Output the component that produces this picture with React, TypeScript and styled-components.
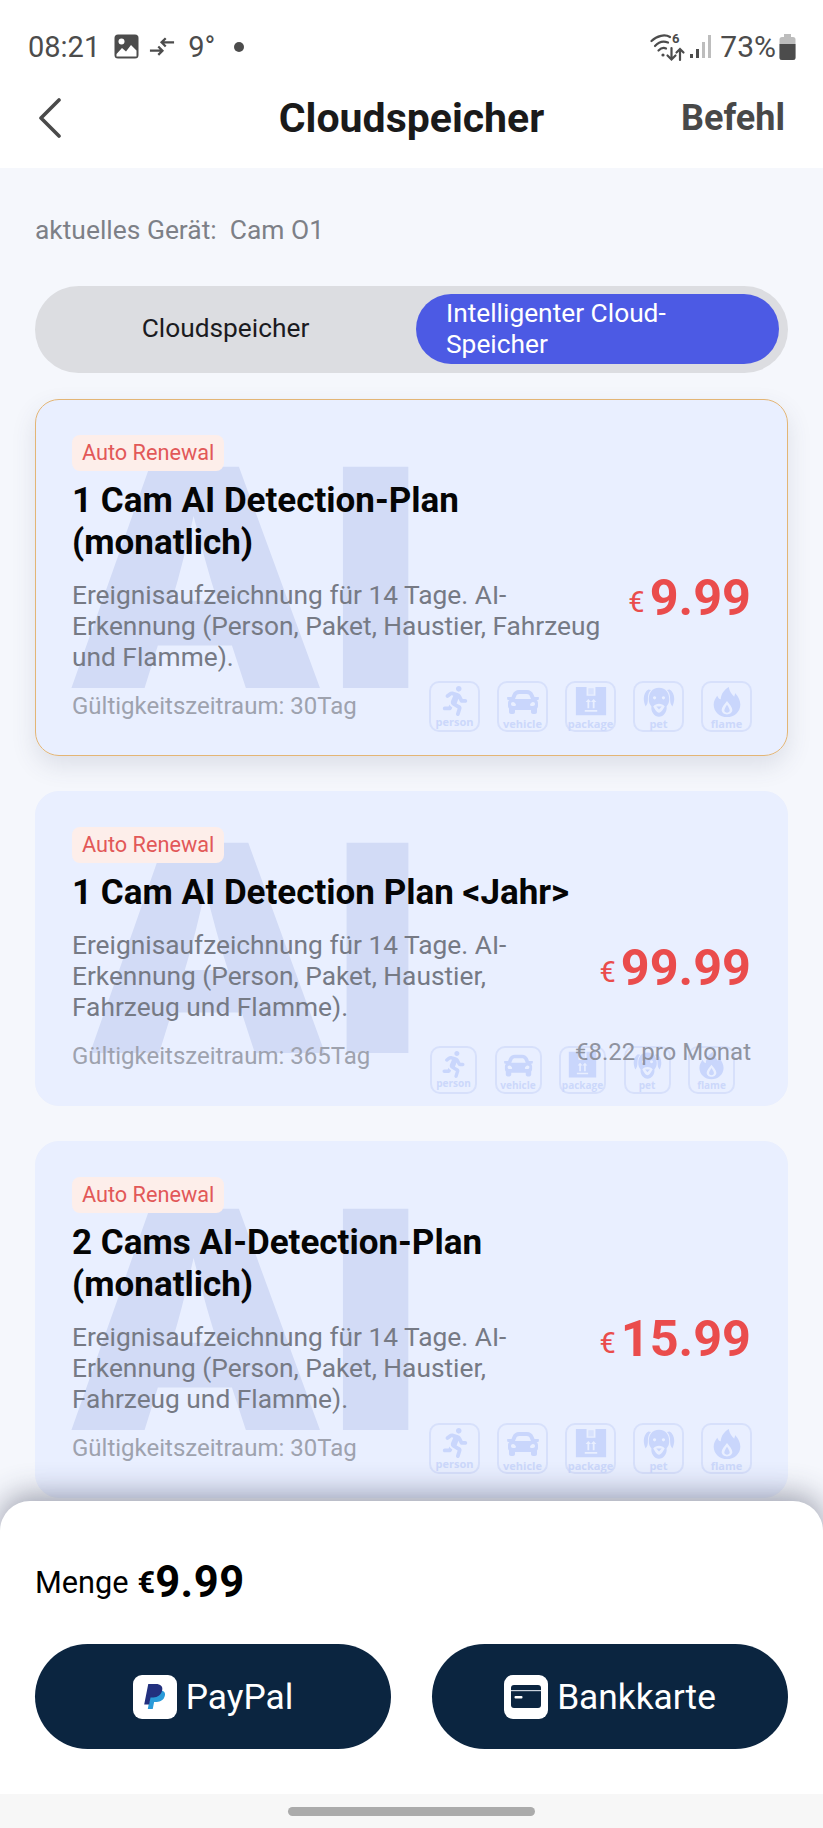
import React from 'react';
import styled, { createGlobalStyle } from 'styled-components';
import { FaRunning, FaCar } from 'react-icons/fa';

const GlobalStyle = createGlobalStyle`
  html, body {
    margin: 0;
    padding: 0;
    background: #f5f7fc;
    font-family: Roboto, "Liberation Sans", sans-serif;
  }
  * { box-sizing: border-box; }
`;

const Page = styled.div`
  width: 823px;
  height: 1828px;
  display: flex;
  flex-direction: column;
  overflow: hidden;
  background: #f5f7fc;
`;

const TopArea = styled.div`
  background: #fff;
  height: 168px;
  flex: none;
`;

const StatusBar = styled.div`
  height: 84px;
  padding: 9px 27px 0 28px;
  display: flex;
  align-items: center;
  justify-content: space-between;
  color: #4c4c4c;
  font-size: 29px;
`;

const StatusGroup = styled.div`
  display: flex;
  align-items: center;
`;

const NavBar = styled.div`
  height: 84px;
  padding: 0 38px 16px;
  display: grid;
  grid-template-columns: 1fr auto 1fr;
  align-items: center;
`;

const NavTitle = styled.div`
  font-size: 41px;
  font-weight: 700;
  color: #1a1a1a;
`;

const NavAction = styled.div`
  justify-self: end;
  font-size: 36px;
  font-weight: 700;
  color: #484848;
`;

const Content = styled.div`
  flex: 1;
  min-height: 0;
  padding: 0 35px;
`;

const DeviceLine = styled.div`
  margin-top: 47px;
  font-size: 26.4px;
  line-height: 30px;
  color: #7d8087;
  white-space: pre;
`;

const Segment = styled.div`
  margin-top: 41px;
  height: 87px;
  border-radius: 44px;
  background: #dcdde1;
  padding: 8px 9px 9px 9px;
  display: flex;
`;

const SegmentItem = styled.div<{ $active?: boolean }>`
  flex: ${(p) => (p.$active ? '0 0 363px' : '1')};
  min-width: 0;
  display: flex;
  align-items: center;
  justify-content: ${(p) => (p.$active ? 'flex-start' : 'center')};
  padding: ${(p) => (p.$active ? '0 30px 1px' : '0 9px 2px 0')};
  border-radius: 35px;
  font-size: 26.3px;
  line-height: 31px;
  color: ${(p) => (p.$active ? '#fff' : '#1b1b1f')};
  background: ${(p) => (p.$active ? '#4c5ae4' : 'transparent')};
`;

const CardList = styled.div`
  margin-top: 26px;
  display: flex;
  flex-direction: column;
`;

const Card = styled.div<{ $selected?: boolean; $gap: number }>`
  position: relative;
  flex: none;
  margin-bottom: ${(p) => p.$gap}px;
  padding: 35px 36px 23px 36px;
  border-radius: 24px;
  background: #e9efff;
  border: 1px solid ${(p) => (p.$selected ? '#e3b575' : '#e9efff')};
`;

const SelectedShadow = styled.div`
  border-radius: 24px;
  box-shadow: 0 10px 24px rgba(60, 70, 100, 0.13);
  margin-bottom: 35px;
`;

const Watermark = styled.div<{ $top: number; $narrow?: boolean }>`
  position: absolute;
  left: ${(p) => (p.$narrow ? 47 : 28)}px;
  top: ${(p) => p.$top}px;
  font-family: Inter, sans-serif;
  font-weight: 900;
  font-size: 304px;
  line-height: 221px;
  color: #d2dbf6;
  transform-origin: 0 0;
  transform: ${(p) => (p.$narrow ? 'scale(1.03, 0.95)' : 'scale(1.09, 1)')};
  white-space: nowrap;
  pointer-events: none;
`;

const CardInner = styled.div`
  position: relative;
`;

const Tag = styled.span`
  display: inline-block;
  height: 36px;
  padding: 0 10px;
  border-radius: 8px;
  background: #fdeeea;
  color: #e25858;
  font-size: 21.7px;
  line-height: 36px;
  vertical-align: top;
`;

const CardTitle = styled.div`
  margin-top: 9px;
  width: 540px;
  font-size: 35px;
  line-height: 42px;
  font-weight: 700;
  color: #050505;
`;

const CardBody = styled.div`
  margin-top: 16px;
  display: flex;
  align-items: flex-start;
  justify-content: space-between;
`;

const Description = styled.div`
  flex: 1;
  min-width: 0;
  margin-right: 20px;
  font-size: 26.3px;
  line-height: 31px;
  color: #767a85;
`;

const Price = styled.div<{ $offset: number }>`
  flex: none;
  display: flex;
  align-items: baseline;
  color: #ea4c4c;
  font-weight: 700;
  font-size: 50.4px;
  line-height: 60px;
  margin-top: ${(p) => p.$offset}px;
`;

const PriceSymbol = styled.span`
  font-size: 29px;
  font-weight: 400;
  margin-right: 5px;
  transform: translateY(-3px);
`;

const CardFooter = styled.div`
  margin-top: 7px;
  height: 52px;
  display: flex;
  align-items: center;
  justify-content: space-between;
`;

const Validity = styled.div`
  font-size: 24px;
  color: #9ea2ae;
`;

const MonthlyNote = styled.div`
  position: absolute;
  right: 0;
  bottom: 16px;
  font-size: 24px;
  color: #8f939f;
`;

const BadgeRow = styled.div<{ $compact?: boolean }>`
  display: flex;
  gap: ${(p) => (p.$compact ? 17.5 : 17)}px;
  align-self: ${(p) => (p.$compact ? 'flex-end' : 'center')};
  margin-bottom: ${(p) => (p.$compact ? -12 : 0)}px;
  margin-right: ${(p) => (p.$compact ? 16 : -1)}px;
`;

const Badge = styled.div<{ $compact?: boolean }>`
  width: ${(p) => (p.$compact ? 47 : 51)}px;
  height: ${(p) => (p.$compact ? 48 : 51)}px;
  border: 2px solid #d7e0fb;
  border-radius: 10px;
  display: flex;
  flex-direction: column;
  align-items: center;
  justify-content: flex-start;
  padding-top: 3px;
  color: #c9d6fc;
  svg { flex: none; }
`;

const BadgeLabel = styled.span<{ $compact?: boolean }>`
  font-family: "Open Sans", sans-serif;
  font-size: ${(p) => (p.$compact ? 10 : 11)}px;
  line-height: 11px;
  font-weight: 700;
  color: #ccd8fb;
  white-space: nowrap;
`;

const Sheet = styled.div`
  position: relative;
  flex: none;
  height: 293px;
  padding: 0 35px;
  background: #fff;
  border-radius: 30px 30px 0 0;
  box-shadow: 0 -6px 30px rgba(50, 55, 80, 0.46);
`;

const TotalRow = styled.div`
  padding: 55px 0 36px;
  height: 143px;
  display: flex;
  align-items: center;
  color: #000;
  font-size: 30.7px;
`;

const TotalSymbol = styled.span`
  margin-left: 9px;
  font-weight: 700;
`;

const TotalValue = styled.span`
  font-size: 43.5px;
  font-weight: 700;
  letter-spacing: 0.5px;
`;

const PayRow = styled.div`
  display: flex;
  justify-content: space-between;
`;

const PayButton = styled.div`
  width: 356px;
  height: 105px;
  border-radius: 53px;
  background: #0b2540;
  color: #fff;
  font-size: 35.3px;
  display: flex;
  align-items: center;
  justify-content: center;
  gap: 9px;
`;

const PayIcon = styled.div`
  width: 44px;
  height: 44px;
  border-radius: 9px;
  background: #fff;
  display: flex;
  align-items: center;
  justify-content: center;
`;

const HomeBar = styled.div`
  flex: none;
  height: 34px;
  background: #f7f7f7;
  display: flex;
  align-items: flex-start;
  justify-content: center;
  padding-top: 13px;
  position: relative;
`;

const HomeHandle = styled.div`
  width: 247px;
  height: 9px;
  border-radius: 5px;
  background: #ababab;
`;

const StatusTime = styled.span`
  margin-right: 14px;
`;

const StatusTemp = styled.span`
  margin-left: 13px;
`;

const StatusPercent = styled.span`
  margin-left: 9px;
  font-size: 30px;
`;

const StatusDot = styled.span`
  width: 10px;
  height: 10px;
  border-radius: 50%;
  background: #4c4c4c;
  margin-left: 19px;
`;

const ImageIcon = () => (
  <svg width="25" height="25" viewBox="0 0 25 25">
    <rect x="0.5" y="0.5" width="24" height="24" rx="3.5" fill="#4c4c4c" />
    <circle cx="7.5" cy="7.5" r="3" fill="#fff" />
    <path d="M2.5 20 L8 14 L12 17.5 L17 11 L22.5 16.5 V22.5 H2.5 Z" fill="#fff" />
  </svg>
);

const SwapIcon = () => (
  <svg width="26" height="22" viewBox="0 0 28 22" style={{ marginLeft: 10 }} fill="none" stroke="#4c4c4c" strokeWidth="2.4">
    <path d="M1 15 H14 M10 10.5 L14.5 15 L10 19.5" />
    <path d="M27 6 H14 M18 1.5 L13.5 6 L18 10.5" />
  </svg>
);

const WifiIcon = () => (
  <svg width="36" height="30" viewBox="0 0 36 30" fill="none" stroke="#4c4c4c" strokeWidth="2.2" strokeLinecap="round">
    <path d="M1.5 9 C7 3.5 15 2 20 5" />
    <path d="M5 14 C9 9.5 14 9 18 10.5" />
    <path d="M8.5 18.5 C11 16 14 15.5 16 16.5" />
    <circle cx="13" cy="23" r="1.6" fill="#4c4c4c" stroke="none" />
    <path d="M21.5 16 V27 M17.5 23.5 L21.5 27.5 L25.5 23.5" />
    <path d="M30 28 V17 M26.5 20.5 L30 17 L33.5 20.5" />
    <text x="22" y="11" fontSize="13" fontWeight="700" fill="#4c4c4c" stroke="none" fontFamily="Roboto">6</text>
  </svg>
);

const SignalIcon = () => (
  <svg width="21" height="26" viewBox="0 0 21 26" style={{ marginLeft: 4 }}>
    <rect x="0" y="20" width="3" height="4" fill="#4c4c4c" />
    <rect x="6" y="15" width="3" height="9" fill="#4c4c4c" />
    <rect x="12" y="8" width="3" height="16" fill="#bdbdbd" />
    <rect x="18" y="1" width="3" height="23" fill="#bdbdbd" />
  </svg>
);

const BatteryIcon = () => (
  <svg width="17" height="26" viewBox="0 0 16 26" style={{ marginLeft: 3 }}>
    <rect x="4.5" y="0" width="7" height="3" fill="#bdbdbd" />
    <rect x="0" y="3" width="16" height="23" rx="2.5" fill="#bdbdbd" />
    <path d="M0 10 H16 V23.5 A2.5 2.5 0 0 1 13.5 26 H2.5 A2.5 2.5 0 0 1 0 23.5 Z" fill="#4c4c4c" />
  </svg>
);

const BackIcon = () => (
  <svg width="24" height="40" viewBox="0 0 24 40" fill="none" stroke="#4a4a4a" strokeWidth="3.6" strokeLinecap="round" strokeLinejoin="round">
    <path d="M21 2 L3 20 L21 38" />
  </svg>
);

const BoxIcon = ({ size }: { size: number }) => (
  <svg width={size} height={size} viewBox="0 0 36 36" fill="currentColor">
    <path
      fillRule="evenodd"
      d="M1 1 H35 V33 H1 Z M13 1 V11 H23 V1 Z M11 27 H25 V29 H11 Z M14 25 H16 V18 H18 L15 14.5 L12 18 H14 Z M20 25 H22 V18 H24 L21 14.5 L18 18 H20 Z"
    />
    <rect x="15" y="2.5" width="6" height="7" opacity="0.55" />
  </svg>
);

const DogIcon = ({ size }: { size: number }) => (
  <svg width={size} height={size} viewBox="0 0 36 36" fill="currentColor">
    <path
      fillRule="evenodd"
      d="M18 2 C26 2 29.5 8 29.5 15 C29.5 18 28.5 21 26.5 23 C27.5 29 23 34.5 18 34.5 C13 34.5 8.5 29 9.5 23 C7.5 21 6.5 18 6.5 15 C6.5 8 10 2 18 2 Z M13 11.5 a1.8 1.8 0 1 0 0.01 0 Z M23 11.5 a1.8 1.8 0 1 0 0.01 0 Z M11.5 23 C14.5 19 21.5 19 24.5 23 C22.5 25.5 21 30 18 30 C15 30 13.5 25.5 11.5 23 Z"
    />
    <path d="M6 4 C1 7 -1 15 3 23 C5 21 5.5 18 5.5 15 C5.5 10 6.5 7 9 4.5 Z M30 4 C35 7 37 15 33 23 C31 21 30.5 18 30.5 15 C30.5 10 29.5 7 27 4.5 Z" />
    <path d="M15 23 H21 L18 26.5 Z" />
  </svg>
);

const FlameIcon = ({ size }: { size: number }) => (
  <svg width={size} height={size} viewBox="0 0 36 36" fill="currentColor">
    <path
      fillRule="evenodd"
      d="M20 1 C21 7 24 9 26 12 C27 10 27 9 27 8 C31 12 33 17 33 21 C33 29 26 35 18 35 C10 35 3 29 3 21 C3 17 5 14 7 11 C8 13 9 15 11 15 C11 9 15 4 20 1 Z M18 17 C15 21 12 24 12 27 C12 30 15 32 18 32 C21 32 24 30 24 27 C24 24 21 21 18 17 Z"
    />
    <path d="M18 21 C16 24 15 26 15 27.5 C15 29 16.5 30 18 30 C19.5 30 21 29 21 27.5 C21 26 20 24 18 21 Z" />
  </svg>
);

const PayPalIcon = () => (
  <svg width="24" height="27" viewBox="0 0 26 30">
    <path d="M9 8 H17 C22 8 25 10 24 14 C23 19 19 21 15 21 H12 L10.5 29 H5 Z" fill="#2a9bd9" />
    <path d="M5.5 1 H14 C19 1 22 3.5 21 8 C20 13 16 16 11 16 H8 L6.5 24 H1 Z" fill="#22307e" />
  </svg>
);

const CardIcon = () => (
  <svg width="30" height="23" viewBox="0 0 30 23">
    <rect x="0" y="0" width="30" height="23" rx="3" fill="#0b2540" />
    <rect x="0" y="5" width="30" height="1.2" fill="#c9d2dc" />
    <rect x="3.5" y="11" width="8" height="2.4" rx="1" fill="#fff" />
  </svg>
);

const BADGES = [
  { key: 'person', label: 'person', icon: (s: number) => <FaRunning size={s - 2} /> },
  { key: 'vehicle', label: 'vehicle', icon: (s: number) => <FaCar size={s} /> },
  { key: 'package', label: 'package', icon: (s: number) => <BoxIcon size={s} /> },
  { key: 'pet', label: 'pet', icon: (s: number) => <DogIcon size={s} /> },
  { key: 'flame', label: 'flame', icon: (s: number) => <FlameIcon size={s} /> },
];

const Badges = ({ compact }: { compact?: boolean }) => (
  <BadgeRow $compact={compact}>
    {BADGES.map((b) => (
      <Badge key={b.key} $compact={compact}>
        {b.icon(compact ? 29 : 32)}
        <BadgeLabel $compact={compact}>{b.label}</BadgeLabel>
      </Badge>
    ))}
  </BadgeRow>
);

interface PlanProps {
  title: string;
  price: string;
  priceOffset: number;
  validity: string;
  monthly?: string;
  compact?: boolean;
  selected?: boolean;
  markTop: number;
  narrow?: boolean;
  gap: number;
}

const DESC = 'Ereignisaufzeichnung für 14 Tage. AI-Erkennung (Person, Paket, Haustier, Fahrzeug und Flamme).';

const PlanCard = ({ title, price, priceOffset, validity, monthly, compact, selected, markTop, narrow, gap }: PlanProps) => (
  <Card $selected={selected} $gap={gap}>
    <Watermark $top={markTop} $narrow={narrow}>AI</Watermark>
    <CardInner>
      <Tag>Auto Renewal</Tag>
      <CardTitle>{title}</CardTitle>
      <CardBody>
        <Description>{DESC}</Description>
        <Price $offset={priceOffset}>
          <PriceSymbol>€</PriceSymbol>
          {price}
        </Price>
      </CardBody>
      <CardFooter>
        <Validity>{validity}</Validity>
        <Badges compact={compact} />
        {monthly && <MonthlyNote>{monthly}</MonthlyNote>}
      </CardFooter>
    </CardInner>
  </Card>
);

export default function App() {
  return (
    <Page>
      <GlobalStyle />
      <TopArea>
        <StatusBar>
          <StatusGroup>
            <StatusTime>08:21</StatusTime>
            <ImageIcon />
            <SwapIcon />
            <StatusTemp>9°</StatusTemp>
            <StatusDot />
          </StatusGroup>
          <StatusGroup>
            <WifiIcon />
            <SignalIcon />
            <StatusPercent>73%</StatusPercent>
            <BatteryIcon />
          </StatusGroup>
        </StatusBar>
        <NavBar>
          <BackIcon />
          <NavTitle>Cloudspeicher</NavTitle>
          <NavAction>Befehl</NavAction>
        </NavBar>
      </TopArea>
      <Content>
        <DeviceLine>aktuelles Gerät:  Cam O1</DeviceLine>
        <Segment>
          <SegmentItem>Cloudspeicher</SegmentItem>
          <SegmentItem $active>Intelligenter Cloud-Speicher</SegmentItem>
        </Segment>
        <CardList>
          <SelectedShadow>
            <PlanCard
              selected
              gap={0}
              markTop={67}
              priceOffset={-12}
              title="1 Cam AI Detection-Plan (monatlich)"
              price="9.99"
              validity="Gültigkeitszeitraum: 30Tag"
            />
          </SelectedShadow>
          <PlanCard
            compact
            narrow
            gap={35}
            markTop={51}
            priceOffset={8}
            title="1 Cam AI Detection Plan <Jahr>"
            price="99.99"
            validity="Gültigkeitszeitraum: 365Tag"
            monthly="€8.22 pro Monat"
          />
          <PlanCard
            gap={0}
            markTop={67}
            priceOffset={-13}
            title="2 Cams AI-Detection-Plan (monatlich)"
            price="15.99"
            validity="Gültigkeitszeitraum: 30Tag"
          />
        </CardList>
      </Content>
      <Sheet>
        <TotalRow>
          Menge
          <TotalSymbol>€</TotalSymbol>
          <TotalValue>9.99</TotalValue>
        </TotalRow>
        <PayRow>
          <PayButton>
            <PayIcon><PayPalIcon /></PayIcon>
            PayPal
          </PayButton>
          <PayButton>
            <PayIcon><CardIcon /></PayIcon>
            Bankkarte
          </PayButton>
        </PayRow>
      </Sheet>
      <HomeBar>
        <HomeHandle />
      </HomeBar>
    </Page>
  );
}
